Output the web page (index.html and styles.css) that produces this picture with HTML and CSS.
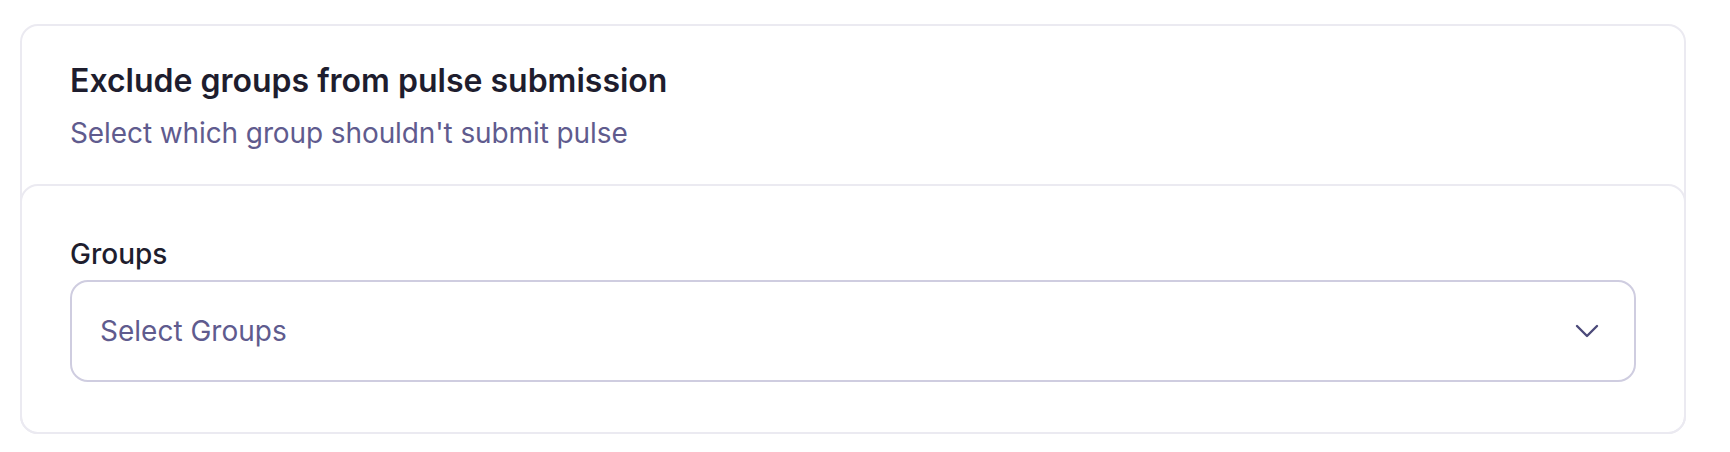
FILE: index.html
```html
<!DOCTYPE html>
<html lang="en">
<head>
  <meta charset="UTF-8" />
  <meta name="viewport" content="width=device-width, initial-scale=1.0" />
  <title>Pulse settings</title>
  <link rel="stylesheet" href="styles.css">
</head>
<body>
  <section class="settings-card">
    <div class="settings-head">
      <h2>Exclude groups from pulse submission</h2>
      <p>Select which group shouldn't submit pulse</p>
    </div>
    <div class="settings-body">
      <label class="field-label" for="groupSelect">Groups</label>
      <button class="select-box" id="groupSelect" type="button">
        <span class="placeholder">Select Groups</span>
        <svg class="chevron" viewBox="0 0 24 16" fill="none" stroke="currentColor" stroke-width="2.4" stroke-linecap="round" stroke-linejoin="round">
          <polyline points="2,3 12,13 22,3"></polyline>
        </svg>
      </button>
    </div>
  </section>
</body>
</html>
```

FILE: styles.css
```css
:root {
  --text: #1e1d2e;
  --muted: #5f5b8e;
  --card-border: #ebeaf1;
  --field-border: #cfcde0;
}

html, body {
  margin: 0;
  padding: 0;
  background: #ffffff;
  font-family: Inter, "Noto Sans", sans-serif;
  color: var(--text);
}

body {
  padding: 24px 0 0 20px;
}

.settings-card {
  width: 1666px;
  box-sizing: border-box;
  border: 2px solid var(--card-border);
  border-radius: 18px;
  background: #ffffff;
}

.settings-head {
  padding: 36px 48px 34px;
}

.settings-head h2 {
  margin: 0;
  font-size: 32px;
  line-height: 38px;
  font-weight: 600;
}

.settings-head p {
  margin: 16px 0 0;
  font-size: 28px;
  line-height: 34px;
  font-weight: 400;
  letter-spacing: -0.1px;
  color: var(--muted);
}

.settings-body {
  margin: 0 -2px -2px;
  border: 2px solid var(--card-border);
  border-radius: 18px;
  padding: 51px 48px 50px;
  display: flex;
  flex-direction: column;
  gap: 9px;
}

.field-label {
  font-size: 28px;
  line-height: 34px;
  font-weight: 500;
}

.select-box {
  display: flex;
  align-items: center;
  justify-content: space-between;
  height: 102px;
  padding: 0 35px 0 28px;
  border: 2px solid var(--field-border);
  border-radius: 18px;
  background: #ffffff;
  font-family: inherit;
  cursor: pointer;
}

.placeholder {
  font-size: 28px;
  color: var(--muted);
}

.chevron {
  width: 24px;
  height: 16px;
  color: #4c4a7a;
}
```
